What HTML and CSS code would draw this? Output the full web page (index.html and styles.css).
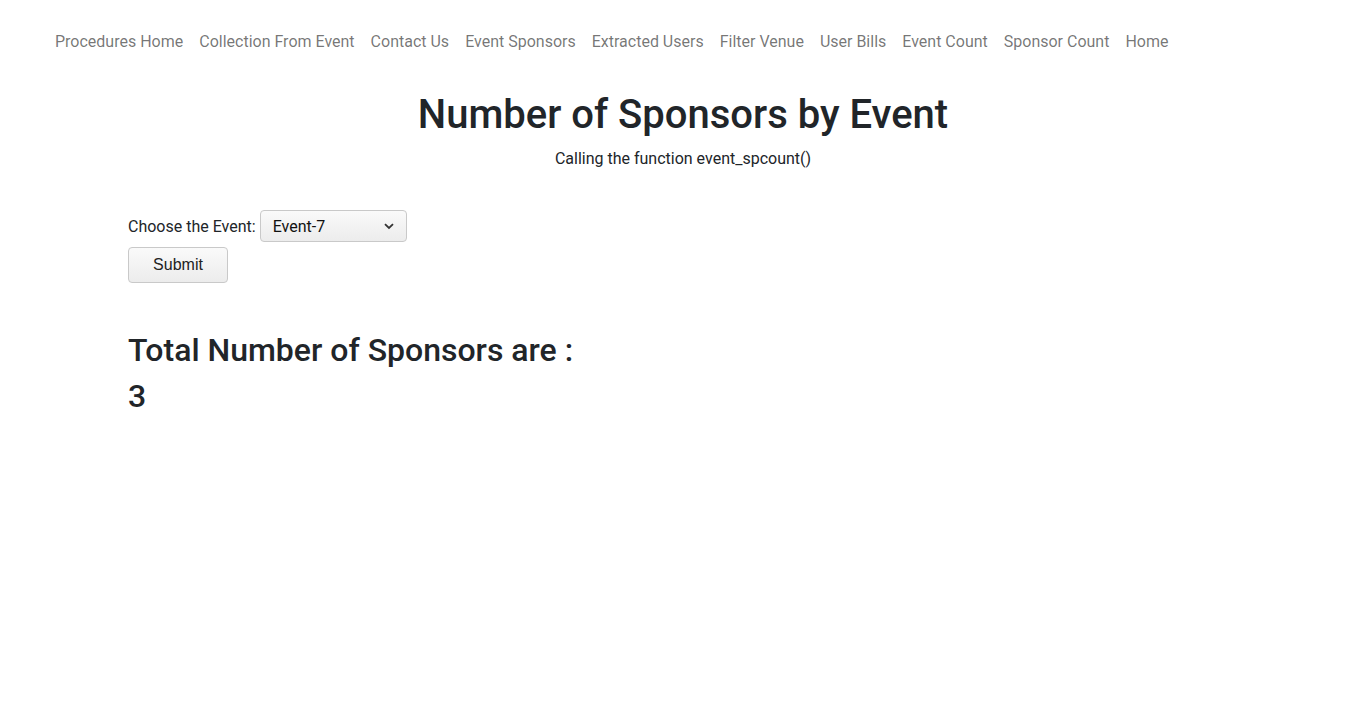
FILE: index.html
```html
<!DOCTYPE html>
<html>
<head>
<meta charset="utf-8">
<link rel="stylesheet" href="styles.css">
</head>
<body>
<nav class="navbar">
  <a class="nav-link" href="#">Procedures Home</a>
  <a class="nav-link" href="#">Collection From Event</a>
  <a class="nav-link" href="#">Contact Us</a>
  <a class="nav-link" href="#">Event Sponsors</a>
  <a class="nav-link" href="#">Extracted Users</a>
  <a class="nav-link" href="#">Filter Venue</a>
  <a class="nav-link" href="#">User Bills</a>
  <a class="nav-link" href="#">Event Count</a>
  <a class="nav-link" href="#">Sponsor Count</a>
  <a class="nav-link" href="#">Home</a>
</nav>
<header class="hero">
  <h1 class="title">Number of Sponsors by Event</h1>
  <p class="subtitle">Calling the function event_spcount()</p>
</header>
<main class="container">
  <form class="form">
    <div class="row">
      <label class="label" for="ev">Choose the Event:</label>
      <div class="select">
        <span class="select-value">Event-7</span>
        <svg class="chev" width="10" height="7" viewBox="0 0 10 7"><path d="M1 1.2 L5 5 L9 1.2" fill="none" stroke="#333" stroke-width="1.8"/></svg>
      </div>
    </div>
    <button class="btn" type="button">Submit</button>
  </form>
  <h2 class="result">Total Number of Sponsors are :<br>3</h2>
</main>
</body>
</html>
```
FILE: styles.css
```css
* { box-sizing: border-box; }
body {
  margin: 0;
  font-family: Roboto, "Liberation Sans", sans-serif;
  color: #212529;
  background: #fff;
}
.navbar {
  display: flex;
  padding: 30px 0 0 47px;
  height: 54px;
}
.nav-link {
  padding: 0 8px;
  font-size: 16px;
  line-height: 24px;
  color: rgba(0,0,0,.55);
  text-decoration: none;
}
.hero {
  text-align: center;
  padding-top: 37px;
}
.title {
  margin: 0;
  font-size: 40px;
  font-weight: 500;
  line-height: 48px;
}
.subtitle {
  margin: 9px 0 0;
  font-size: 16px;
  line-height: 22px;
}
.container {
  padding: 40px 0 0 128px;
}
.row {
  display: flex;
  align-items: center;
  gap: 4px;
}
.label {
  font-size: 16px;
}
.select {
  width: 147px;
  height: 32px;
  border: 1px solid #c9c9c9;
  border-radius: 4px;
  background: linear-gradient(#fafafa, #ececec);
  display: flex;
  align-items: center;
  justify-content: space-between;
  padding: 0 12px 0 12px;
}
.select-value {
  font-size: 16px;
  color: #111;
}
.btn {
  margin-top: 5px;
  width: 100px;
  height: 36px;
  border: 1px solid #c9c9c9;
  border-radius: 4px;
  background: linear-gradient(#fafafa, #ececec);
  font-family: "Liberation Sans", Arial, sans-serif;
  font-size: 16px;
  color: #222;
}
.result {
  margin: 44px 0 0;
  font-size: 32px;
  font-weight: 500;
  line-height: 46px;
}
```
